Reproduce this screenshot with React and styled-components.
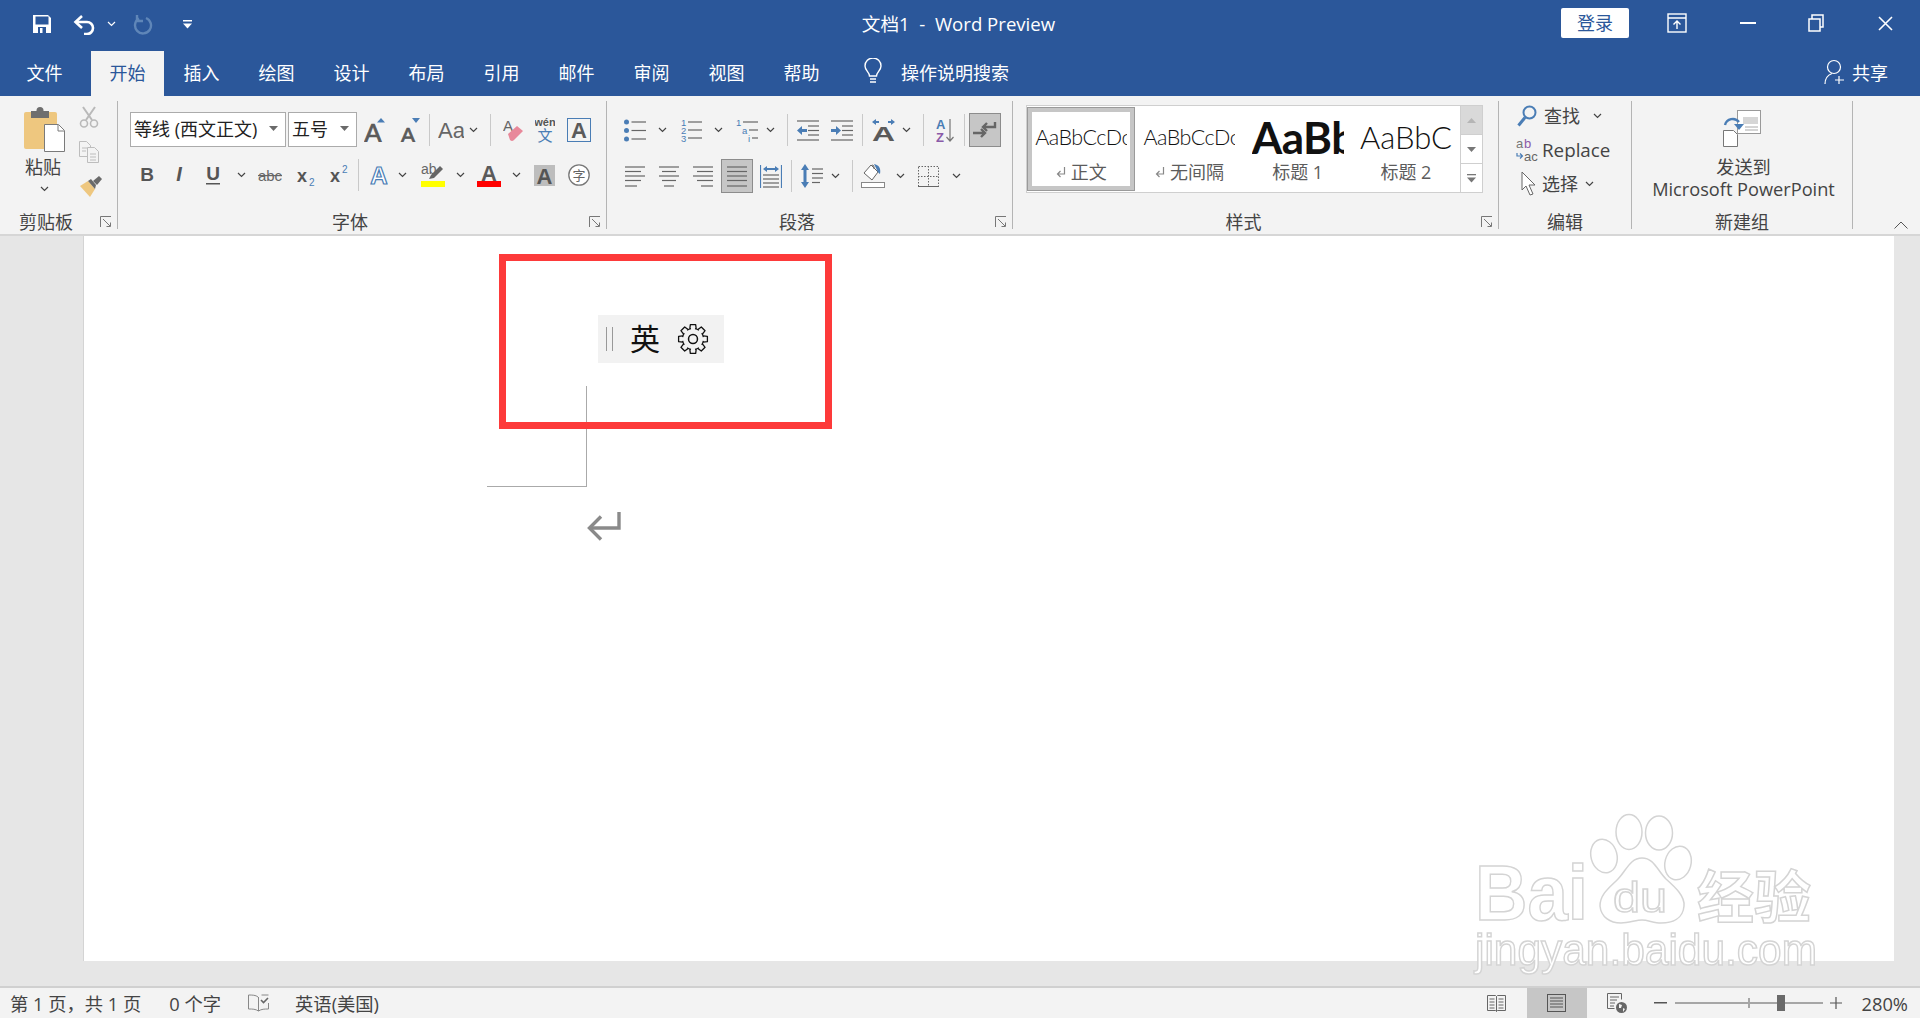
import React from "react";
import styled, { createGlobalStyle } from "styled-components";

const CJK = `"Open Sans", "Noto Sans CJK SC", sans-serif`;
const BLUE = "#4a7db5";
const GRAY = "#666";

const Global = createGlobalStyle`
  html, body { margin: 0; padding: 0; height: 100%; overflow: hidden; }
  body { font-family: ${CJK}; background: #e6e6e6; }
  svg { display: block; flex-shrink: 0; }
`;

const Shell = styled.div`
  position: relative;
  display: flex;
  flex-direction: column;
  height: 100vh;
  overflow: hidden;
`;

const TitleBar = styled.div`
  display: grid;
  grid-template-columns: 1fr auto 1fr;
  height: 51px;
  background: #2b579a;
  color: #fff;
`;

const Quick = styled.div`
  display: flex;
  align-items: center;
  height: 48px;
`;

const QuickItem = styled.span`
  display: flex;
  margin-left: ${(p) => p.$ml}px;
`;

const DocTitle = styled.div`
  font-size: 18.6px;
  line-height: 47px;
  white-space: pre;
  margin-right: 3px;
`;

const WindowControls = styled.div`
  display: flex;
  align-items: center;
  justify-content: flex-end;
  height: 46px;
`;

const SignIn = styled.div`
  width: 68px;
  height: 30px;
  margin-right: 38px;
  background: #fff;
  border-radius: 2px;
  color: #2b579a;
  font-size: 18px;
  line-height: 30px;
  text-align: center;
`;

const TabBar = styled.div`
  display: flex;
  align-items: stretch;
  height: 45px;
  background: #2b579a;
  padding-left: 7px;
  color: #fff;
  font-size: 18px;
`;

const Tab = styled.div`
  width: ${(p) => (p.$active ? 73 : 75)}px;
  margin-right: ${(p) => p.$mr || 0}px;
  line-height: 44px;
  text-align: center;
  background: ${(p) => (p.$active ? "#f3f3f3" : "transparent")};
  color: ${(p) => (p.$active ? "#2b579a" : "#fff")};
`;

const Search = styled.div`
  display: flex;
  align-items: center;
  gap: 19px;
  margin-left: 25px;
  padding-bottom: 4px;
`;

const Share = styled.div`
  display: flex;
  align-items: center;
  gap: 6px;
  margin-left: auto;
  margin-right: 32px;
  padding-bottom: 3px;
`;

const Ribbon = styled.div`
  display: flex;
  align-items: flex-start;
  height: 138px;
  box-sizing: content-box;
  background: #f3f3f3;
  border-bottom: 2px solid #d6d6d6;
  color: #444;
  font-size: 18px;
`;

const Group = styled.div`
  position: relative;
  display: flex;
  flex-direction: column;
  width: ${(p) => p.$w}px;
  height: 133px;
  margin-top: 5px;
`;

const GroupRule = styled.div`
  width: 1px;
  height: 128px;
  margin-top: 5px;
  background: #b4b4b4;
`;

const GroupBody = styled.div`
  display: flex;
  height: 108px;
`;

const GroupLabel = styled.div`
  height: 26px;
  margin-right: ${(p) => p.$mr || 0}px;
  line-height: 28px;
  text-align: center;
  white-space: nowrap;
`;

const Launcher = styled.span`
  position: absolute;
  right: 5px;
  bottom: 6px;
`;

const Collapse = styled.span`
  margin-left: 41px;
  margin-top: 125px;
`;

const PasteCol = styled.div`
  display: flex;
  flex-direction: column;
  align-items: center;
  flex-shrink: 0;
  width: 88px;
  padding-top: 6px;
  line-height: 22px;
`;

const PasteLabel = styled.div`
  margin-top: 4px;
  margin-left: -2px;
`;

const PasteChev = styled.div`
  margin-top: 8px;
`;

const SmallTools = styled.div`
  display: flex;
  flex-direction: column;
  gap: 13px;
  margin-left: -9px;
  padding-top: 5px;
`;

const Stack = styled.div`
  display: flex;
  flex-direction: column;
  padding-top: ${(p) => p.$top}px;
  gap: ${(p) => p.$gap}px;
`;

const ToolRow = styled.div`
  display: flex;
  align-items: center;
  height: ${(p) => p.$h || 34}px;
  padding-left: ${(p) => p.$pl || 0}px;
`;

const Tool = styled.span`
  display: flex;
  flex-shrink: 0;
  margin-left: ${(p) => p.$ml || 0}px;
`;

const RowRule = styled.span`
  flex-shrink: 0;
  width: 1px;
  height: 32px;
  margin-left: ${(p) => p.$ml}px;
  background: #c9c9c9;
`;

const Pressed = styled.span`
  display: flex;
  align-items: center;
  justify-content: center;
  flex-shrink: 0;
  box-sizing: border-box;
  width: 32px;
  height: 34px;
  margin-left: ${(p) => p.$ml}px;
  background: #c6c6c6;
  border: 1px solid #8c8c8c;
`;

const Combo = styled.div`
  display: flex;
  align-items: center;
  justify-content: space-between;
  box-sizing: border-box;
  width: ${(p) => p.$w}px;
  height: 35px;
  margin-right: 2px;
  padding: 0 7px 3px 3px;
  background: #fff;
  border: 1px solid #ababab;
  color: #222;
  white-space: nowrap;
`;

const Gallery = styled.div`
  display: flex;
  box-sizing: border-box;
  width: 457px;
  height: 88px;
  margin: 4px 0 0 13px;
  background: #fff;
  border: 1px solid #cfcfcf;
`;

const StyleItem = styled.div`
  display: flex;
  flex-direction: column;
  align-items: center;
  box-sizing: border-box;
  width: 108.5px;
  height: 84px;
  margin-top: 1px;
  padding-top: ${(p) => (p.$selected ? 0 : 5)}px;
  ${(p) => p.$selected && "border: 5px solid #c6c6c6; outline: 1px solid #9a9a9a; outline-offset: -1px;"}
`;

const Sample = styled.div`
  width: 92px;
  height: 50px;
  overflow: hidden;
  white-space: nowrap;
  color: #111;
  line-height: 50px;
  font-family: "Lato", sans-serif;
  font-size: ${(p) => p.$size}px;
  font-weight: ${(p) => p.$weight || 300};
  letter-spacing: ${(p) => p.$track || 0}px;
`;

const StyleName = styled.div`
  display: flex;
  align-items: center;
  gap: 5px;
  color: #5c5c5c;
  font-size: 18px;
  line-height: 20px;
`;

const GalleryScroll = styled.div`
  display: flex;
  flex-direction: column;
  margin-left: auto;
  width: 22px;
`;

const ScrollBtn = styled.div`
  flex: 1;
  display: flex;
  align-items: center;
  justify-content: center;
  background: ${(p) => (p.$off ? "#d9d9d9" : "#fff")};
  border-left: 1px solid #cfcfcf;
  border-bottom: ${(p) => (p.$last ? 0 : 1)}px solid #cfcfcf;
`;

const EditRow = styled.div`
  display: flex;
  align-items: center;
  height: 30px;
  padding-left: ${(p) => p.$pl || 18}px;
  gap: ${(p) => p.$gap || 5}px;
  font-size: ${(p) => p.$size || 18}px;
  line-height: 28px;
`;

const SendButton = styled.div`
  display: flex;
  flex-direction: column;
  align-items: center;
  width: 100%;
  padding-top: 9px;
  line-height: 22px;
  text-align: center;
  white-space: nowrap;
`;

const SendText = styled.div`
  margin-top: 9px;
  margin-left: 3px;
  font-size: 18.2px;
`;

const Workspace = styled.div`
  flex: 1;
  min-height: 0;
  padding: 0 26px 0 84px;
  background: #e6e6e6;
`;

const Page = styled.div`
  position: relative;
  height: 725px;
  padding: 150px 0 0 403px;
  box-sizing: border-box;
  background: #fff;
  box-shadow: -1px 0 0 #d4d4d4;
`;

const MarginCorner = styled.div`
  width: 99px;
  height: 100px;
  border-right: 1px solid #aaa;
  border-bottom: 1px solid #aaa;
`;

const ParaMark = styled.div`
  margin: 24px 0 0 100px;
`;

const Callout = styled.div`
  position: absolute;
  left: 415px;
  top: 18px;
  box-sizing: border-box;
  width: 333px;
  height: 175px;
  border: 7px solid #fd3a3a;
`;

const ImeBar = styled.div`
  position: absolute;
  left: 514px;
  top: 79px;
  display: flex;
  align-items: center;
  width: 126px;
  height: 48px;
  background: #f2f2f2;
  color: #111;
  font-size: 30px;
`;

const ImeGrip = styled.span`
  width: 5px;
  height: 24px;
  margin: 0 17px 0 8px;
  border-left: 1px solid #999;
  border-right: 1px solid #999;
`;

const ImeLang = styled.span`
  margin-right: 17px;
  line-height: 48px;
`;

const StatusBar = styled.div`
  display: flex;
  align-items: center;
  height: 30px;
  background: #f3f3f3;
  border-top: 2px solid #d0d0d0;
  color: #444;
  font-size: 18.3px;
  white-space: nowrap;
`;

const StatusText = styled.span`
  margin-left: ${(p) => p.$ml}px;
`;

const ViewBtn = styled.span`
  display: flex;
  align-items: center;
  justify-content: center;
  width: ${(p) => p.$w}px;
  height: 30px;
  margin-left: ${(p) => (p.$auto ? "auto" : "0")};
  background: ${(p) => (p.$active ? "#c6c6c6" : "transparent")};
`;

const ZoomTrack = styled.div`
  position: relative;
  width: 148px;
  height: 2px;
  margin: 0 7px 0 8px;
  background: #a6a6a6;
`;

const ZoomTick = styled.span`
  position: absolute;
  left: 73px;
  top: -4px;
  width: 2px;
  height: 10px;
  background: #a6a6a6;
`;

const ZoomThumb = styled.span`
  position: absolute;
  left: 102px;
  top: -7px;
  width: 8px;
  height: 16px;
  background: #6a6a6a;
`;

const Watermark = styled.div`
  position: absolute;
  left: 1465px;
  top: 805px;
  pointer-events: none;
  svg { filter: blur(0.5px); }
`;

/* small shared drawings */
const Chev = ({ ml, c = "#444" }) => (
  <Tool $ml={ml}>
    <svg width="9" height="6" viewBox="0 0 9 6"><path d="M1 1l3.5 3.5L8 1" fill="none" stroke={c} strokeWidth="1.2" /></svg>
  </Tool>
);

const LauncherIcon = () => (
  <svg width="12" height="12" viewBox="0 0 12 12" fill="none" stroke="#777" strokeWidth="1">
    <path d="M.5 11V.5H11" />
    <path d="M3 3l7 7M10.500 6.500v4h-4" />
  </svg>
);

const DownTriangle = () => (
  <svg width="9" height="5" viewBox="0 0 9 5"><path d="M0 0h9L4.500 5z" fill="#6a6a6a" /></svg>
);

const GlyphA = ({ w, h, size, y, x, children }) => (
  <svg width={w} height={h} viewBox={`0 0 ${w} ${h}`}>
    <text x={x ?? w / 2} y={y} textAnchor="middle" fontFamily="Liberation Sans, sans-serif" fontSize={size} fill="#5a5a5a" stroke="#5a5a5a" strokeWidth="0.7">A</text>
    {children}
  </svg>
);

const Lines = ({ x1, x2, ys, c = GRAY }) => ys.map((y, i) => {
  const a = Array.isArray(x1) ? x1[i] : x1;
  const b = Array.isArray(x2) ? x2[i] : x2;
  return <path key={y} d={`M${a} ${y}H${b}`} stroke={c} strokeWidth="1.2" />;
});

const smallNum = { fontFamily: "Liberation Sans, sans-serif", fontSize: 9.5, fill: BLUE };

/* quick access and window icons */
const SaveIcon = () => (
  <svg width="20" height="20" viewBox="0 0 20 20">
    <path d="M1 1h15l3 3v15H1z" fill="#fff" />
    <rect x="3.500" y="2.500" width="13" height="8" fill="#2b579a" />
    <rect x="6" y="13" width="8" height="6" fill="#2b579a" />
    <rect x="8" y="14" width="2.500" height="5" fill="#fff" />
  </svg>
);
const UndoIcon = () => (
  <svg width="24" height="21" viewBox="0 0 24 21" fill="none" stroke="#fff" strokeWidth="2.600">
    <path d="M9 2L2.500 8 9 14" />
    <path d="M3 8h11a6 6 0 0 1 0 12h-3" />
  </svg>
);
const RedoIcon = () => (
  <svg width="21" height="21" viewBox="0 0 21 21" fill="none" stroke="#5f86b8" strokeWidth="2.400">
    <path d="M7 4.500a8 8 0 1 0 7-.5" />
    <path d="M5 1v6h6" />
  </svg>
);
const CustomizeIcon = () => (
  <svg width="9" height="9" viewBox="0 0 9 9" fill="#fff"><rect y="0" width="9" height="1.500" /><path d="M0 3.500h9L4.500 8.500z" /></svg>
);
const DisplayIcon = () => (
  <svg width="20" height="20" viewBox="0 0 20 20" fill="none" stroke="#fff" strokeWidth="1.400">
    <rect x="1" y="1" width="18" height="18" />
    <path d="M1 5h18M10 16V8M6.500 11.500L10 8l3.500 3.500" />
  </svg>
);
const MinIcon = () => <svg width="16" height="2" viewBox="0 0 16 2"><rect width="16" height="2" fill="#fff" /></svg>;
const RestoreIcon = () => (
  <svg width="16" height="18" viewBox="0 0 16 18" fill="none" stroke="#fff" strokeWidth="1.500">
    <rect x="1" y="5" width="11" height="12" />
    <path d="M4 5V1h11v12h-3" />
  </svg>
);
const CloseIcon = () => (
  <svg width="15" height="15" viewBox="0 0 15 15" stroke="#fff" strokeWidth="1.600"><path d="M1 1l13 13M14 1L1 14" /></svg>
);
const BulbIcon = () => (
  <svg width="18" height="27" viewBox="0 0 18 27" fill="none" stroke="#fff" strokeWidth="1.400">
    <path d="M5.500 18c0-4-4.500-5.500-4.500-10a8 8 0 0 1 16 0c0 4.500-4.500 6-4.500 10z" />
    <path d="M6 21h6M6 24h6" />
  </svg>
);
const ShareIcon = () => (
  <svg width="22" height="26" viewBox="0 0 22 26" fill="none" stroke="#fff" strokeWidth="1.200">
    <circle cx="10" cy="8" r="6.500" />
    <path d="M1 25c0-6 3-9 7-10.500M15 17v8M11 21h9" />
  </svg>
);

/* clipboard */
const PasteIcon = () => (
  <svg width="41" height="45" viewBox="0 0 41 45">
    <rect x="0" y="5" width="33" height="37" rx="2" fill="#eec77f" />
    <rect x="7" y="4" width="18" height="7" fill="#6e6e6e" />
    <circle cx="16" cy="3.500" r="3.500" fill="#6e6e6e" />
    <path d="M20.500 17.500h14l6 6v21h-20z" fill="#fff" stroke="#7a7a7a" />
    <path d="M34 18v6h6" fill="none" stroke="#7a7a7a" />
  </svg>
);
const CutIcon = () => (
  <svg width="20" height="22" viewBox="0 0 20 22" fill="none" stroke="#b9b9b9" strokeWidth="2">
    <path d="M4 1l9 13M16 1L7 14" />
    <circle cx="5" cy="17.500" r="3.500" strokeWidth="1.600" />
    <circle cx="15" cy="17.500" r="3.500" strokeWidth="1.600" />
  </svg>
);
const CopyIcon = () => (
  <svg width="20" height="22" viewBox="0 0 20 22" fill="#f3f3f3" stroke="#bdbdbd">
    <path d="M.5.500h7l4 4v11H.5z" />
    <path d="M8.500 6.500h7l4 4v11h-11z" />
    <path d="M3 7h5M3 10h4M11 13h6M11 16h6M11 19h6" />
  </svg>
);
const PainterIcon = () => (
  <svg width="23" height="21" viewBox="0 0 23 21">
    <path d="M1 10l8-5 7 8-5 8z" fill="#eec77f" />
    <path d="M9 5l3-2 5 6-1 4z" fill="#6a6a6a" />
    <path d="M14 5l6-5 3 3-5 6z" fill="#6a6a6a" />
  </svg>
);

/* font group */
const GrowIcon = () => (
  <GlyphA w={22} h={24} size={26} y={24} x={9}><path d="M13 4.500h8L17 0z" fill={BLUE} /></GlyphA>
);
const ShrinkIcon = () => (
  <GlyphA w={20} h={24} size={21} y={24} x={8}><path d="M12 0h8l-4 5z" fill={BLUE} /></GlyphA>
);
const CaseIcon = () => (
  <svg width="26" height="22" viewBox="0 0 26 22">
    <text x="0" y="19" fontFamily="Liberation Sans, sans-serif" fontSize="22" fill="#666">Aa</text>
  </svg>
);
const EraserIcon = () => (
  <svg width="20" height="24" viewBox="0 0 20 24">
    <text x="0" y="13" fontFamily="Liberation Sans, sans-serif" fontSize="15" fill="#666">A</text>
    <path d="M5 16l9-8 6 5-9 9q-2 2-4 0z" fill="#e8889a" />
  </svg>
);
const WenIcon = () => (
  <svg width="20" height="26" viewBox="0 0 20 26">
    <text x="10" y="9" textAnchor="middle" fontFamily="Liberation Sans, sans-serif" fontWeight="bold" fontSize="11" fill="#555">wén</text>
    <text x="10" y="24" textAnchor="middle" fontFamily="Noto Sans CJK SC, sans-serif" fontSize="15" fill={BLUE}>文</text>
  </svg>
);
const BoxAIcon = () => (
  <svg width="24" height="24" viewBox="0 0 24 24">
    <rect x=".500" y=".500" width="23" height="23" fill="none" stroke={BLUE} />
    <text x="12" y="20" textAnchor="middle" fontFamily="Liberation Sans, sans-serif" fontWeight="bold" fontSize="22" fill="#5a5a5a">A</text>
  </svg>
);
const StyleText = ({ w, children, style, size = 19, y = 18 }) => (
  <svg width={w} height="24" viewBox={`0 0 ${w} 24`}>
    <text x={w / 2} y={y} textAnchor="middle" fontFamily="Liberation Sans, sans-serif" fontWeight="bold" fontStyle={style} fontSize={size} fill="#555">{children}</text>
  </svg>
);
const UnderlineIcon = () => (
  <svg width="14" height="24" viewBox="0 0 14 24">
    <text x="7" y="17" textAnchor="middle" fontFamily="Liberation Sans, sans-serif" fontWeight="bold" fontSize="19" fill="#555">U</text>
    <rect x="0" y="20" width="14" height="1.500" fill="#555" />
  </svg>
);
const StrikeIcon = () => (
  <svg width="24" height="24" viewBox="0 0 24 24">
    <text x="12" y="18" textAnchor="middle" fontFamily="Liberation Sans, sans-serif" fontSize="15" fill="#666">abc</text>
    <rect x="0" y="12" width="24" height="1.200" fill="#666" />
  </svg>
);
const ScriptIcon = ({ up }) => (
  <svg width="19" height="24" viewBox="0 0 19 24">
    <text x="0" y="19" fontFamily="Liberation Sans, sans-serif" fontWeight="bold" fontSize="18" fill="#555">x</text>
    <text x="12" y={up ? 10 : 23} fontFamily="Liberation Sans, sans-serif" fontSize="10" fill={BLUE}>2</text>
  </svg>
);
const GlowIcon = () => (
  <svg width="18" height="24" viewBox="0 0 18 24">
    <text x="9" y="21" textAnchor="middle" fontFamily="Liberation Sans, sans-serif" fontWeight="bold" fontSize="24" fill="#fff" stroke={BLUE} strokeWidth="1.200">A</text>
  </svg>
);
const HighlightIcon = () => (
  <svg width="24" height="24" viewBox="0 0 24 24">
    <text x="0" y="11" fontFamily="Liberation Sans, sans-serif" fontSize="14" fill="#666">ab</text>
    <path d="M8 16l2-4 9-9 3 3-9 9z" fill="#666" />
    <rect x="0" y="18" width="24" height="6" fill="#ff0" />
  </svg>
);
const ColorAIcon = () => (
  <svg width="24" height="24" viewBox="0 0 24 24">
    <text x="12" y="18" textAnchor="middle" fontFamily="Liberation Sans, sans-serif" fontWeight="bold" fontSize="22" fill="#5a5a5a">A</text>
    <rect x="0" y="18" width="24" height="6" fill="#f00" />
  </svg>
);
const ShadedAIcon = () => (
  <svg width="21" height="21" viewBox="0 0 21 21">
    <rect width="21" height="21" fill="#bdbdbd" />
    <text x="10.500" y="18.500" textAnchor="middle" fontFamily="Liberation Sans, sans-serif" fontWeight="bold" fontSize="22" fill="#555">A</text>
  </svg>
);
const CircledIcon = () => (
  <svg width="22" height="22" viewBox="0 0 22 22">
    <circle cx="11" cy="11" r="10.200" fill="#fff" stroke="#777" strokeWidth="1.300" />
    <text x="11" y="16" textAnchor="middle" fontFamily="Noto Sans CJK SC, sans-serif" fontSize="13" fill="#666">字</text>
  </svg>
);

/* paragraph group */
const BulletsIcon = () => (
  <svg width="22" height="23" viewBox="0 0 22 23">
    {[3, 11.500, 20].map((y) => <circle key={y} cx="2.500" cy={y} r="2.500" fill={BLUE} />)}
    <Lines x1={7.500} x2={22} ys={[3, 11.500, 20]} />
  </svg>
);
const NumberedIcon = () => (
  <svg width="22" height="24" viewBox="0 0 22 24">
    <text x="1" y="8" {...smallNum}>1</text><text x="1" y="16" {...smallNum}>2</text><text x="1" y="24" {...smallNum}>3</text>
    <Lines x1={8} x2={22} ys={[4, 12, 20]} />
  </svg>
);
const MultiIcon = () => (
  <svg width="22" height="24" viewBox="0 0 22 24">
    <text x="0" y="8" {...smallNum}>1</text><text x="6" y="16" {...smallNum}>a</text><text x="12" y="24" {...smallNum}>i</text>
    <Lines x1={[7, 13, 16]} x2={22} ys={[4, 12, 20]} />
  </svg>
);
const IndentIcon = ({ out }) => (
  <svg width="22" height="21" viewBox="0 0 22 21">
    <Lines x1={[0, 11, 11, 11, 0]} x2={22} ys={[1, 6, 10.500, 15, 20]} />
    <path d={out ? "M0 10.500L5 6v3h5v3H5v3z" : "M10 10.500L5 6v3H0v3h5v3z"} fill={BLUE} />
  </svg>
);
const DirectionIcon = () => (
  <svg width="23" height="22" viewBox="0 0 23 22">
    <path d="M0 3l4-3v2h3v2H4v2zM23 3l-4-3v2h-3v2h3v2z" fill={BLUE} />
    <text x="11.500" y="22" textAnchor="middle" fontFamily="Liberation Sans, sans-serif" fontWeight="bold" fontSize="21" fill="#5a5a5a" textLength="23" lengthAdjust="spacingAndGlyphs">A</text>
  </svg>
);
const SortIcon = () => (
  <svg width="18" height="25" viewBox="0 0 18 25">
    <text x="0" y="11" fontFamily="Liberation Sans, sans-serif" fontWeight="bold" fontSize="13" fill={BLUE}>A</text>
    <text x="0" y="24" fontFamily="Liberation Sans, sans-serif" fontWeight="bold" fontSize="13" fill="#8a5aa8">Z</text>
    <path d="M14 1v22M10.500 19l3.500 4 3.500-4" fill="none" stroke="#777" strokeWidth="1.200" />
  </svg>
);
const MarksIcon = () => (
  <svg width="24" height="20" viewBox="0 0 24 20" fill="none" stroke="#666" strokeWidth="2.400">
    <path d="M22 2v5H11M14 3l-4 4 4 4" />
    <path d="M0 13h11M8 9l4 4-4 4" />
  </svg>
);
const AlignIcon = ({ spans }) => (
  <svg width="20" height="21" viewBox="0 0 20 21">
    <Lines x1={spans.map((s) => s[0])} x2={spans.map((s) => s[1])} ys={[1, 5.500, 10, 14.500, 20]} />
  </svg>
);
const DistributeIcon = () => (
  <svg width="22" height="23" viewBox="0 0 22 23">
    <path d="M.500 0v23M21.500 0v23" stroke={BLUE} strokeWidth="1.200" />
    <path d="M3 4l4-3v2h8V1l4 3-4 3V5H7v2z" fill={BLUE} />
    <Lines x1={3} x2={19} ys={[10, 14, 18, 22]} />
  </svg>
);
const SpacingIcon = () => (
  <svg width="22" height="24" viewBox="0 0 22 24">
    <path d="M4 0l4 6H5.500v12H8l-4 6-4-6h2.500V6H0z" fill={BLUE} />
    <Lines x1={11} x2={22} ys={[5, 9.500, 14]} />
    <Lines x1={11} x2={19} ys={[18.500]} />
  </svg>
);
const ShadeIcon = () => (
  <svg width="24" height="24" viewBox="0 0 24 24">
    <path d="M10 1l7 7-6 8-8-7z" fill="#fff" stroke="#666" />
    <path d="M11 5V1M13 0c5 1 7 4 6 10-2-1-3-4-4-6z" fill={BLUE} stroke="none" />
    <path d="M11 1a2 2 0 0 1 2 2v2" fill="none" stroke="#666" />
    <rect x=".500" y="18.500" width="23" height="5" fill="#fff" stroke="#888" />
  </svg>
);
const BordersIcon = () => (
  <svg width="21" height="21" viewBox="0 0 21 21" fill="none" stroke="#666" strokeDasharray="1.500 1.500">
    <path d="M.500.500h20v20H.500zM10.500 0v21M0 10.500h21" />
    <path d="M0 20.500h21" strokeDasharray="none" />
  </svg>
);

/* styles, editing, new group */
const ReturnTiny = () => (
  <svg width="10" height="12" viewBox="0 0 10 12" fill="none" stroke="#888" strokeWidth="1.200"><path d="M8.500 1v7H2M4.500 5L1.500 8l3 3" /></svg>
);
const UpTri = ({ c }) => <svg width="9" height="5" viewBox="0 0 9 5"><path d="M0 5h9L4.500 0z" fill={c} /></svg>;
const DownTri = ({ c }) => <svg width="9" height="5" viewBox="0 0 9 5"><path d="M0 0h9L4.500 5z" fill={c} /></svg>;
const MoreTri = () => (
  <svg width="9" height="9" viewBox="0 0 9 9" fill="#777"><rect width="9" height="1.300" /><path d="M0 3.500h9L4.500 8.500z" /></svg>
);
const FindIcon = () => (
  <svg width="20" height="22" viewBox="0 0 20 22" fill="none" stroke={BLUE}>
    <circle cx="12.500" cy="7.500" r="6" strokeWidth="2" />
    <path d="M8 12.500L1.500 20.500" strokeWidth="3" />
  </svg>
);
const ReplaceIcon = () => (
  <svg width="23" height="24" viewBox="0 0 23 24">
    <text x="0" y="10" fontFamily="Liberation Sans, sans-serif" fontSize="13" fill="#777">a</text>
    <text x="8" y="10" fontFamily="Liberation Sans, sans-serif" fontSize="13" fill="#8a5aa8">b</text>
    <text x="8" y="23" fontFamily="Liberation Sans, sans-serif" fontSize="13" fill="#666">ac</text>
    <path d="M1 15v3h5M4 15.500L6.500 18 4 20.500" fill="none" stroke={BLUE} strokeWidth="1.200" />
  </svg>
);
const PointerIcon = () => (
  <svg width="16" height="26" viewBox="0 0 16 26"><path d="M1 1v18l4-4 4 9 3-1-4-9h6z" fill="#fff" stroke="#666" /></svg>
);
const SendIcon = () => (
  <svg width="38" height="37" viewBox="0 0 38 37">
    <rect x="14.500" y=".500" width="23" height="23" fill="#fff" stroke="#999" />
    <path d="M20 7h15v7H20z" fill="#d6d6d6" />
    <path d="M22 17h13M22 20h13" stroke="#aaa" />
    <path d="M.500 20.500h10l4 4v12H.500z" fill="#fff" stroke="#777" />
    <path d="M2 15a8 8 0 0 1 14-3" fill="none" stroke={BLUE} strokeWidth="2.400" />
    <path d="M11 14h10l-5 6z" fill={BLUE} />
  </svg>
);
const CaretUp = () => (
  <svg width="14" height="8" viewBox="0 0 14 8"><path d="M.500 7.500L7 1l6.500 6.500" fill="none" stroke="#555" /></svg>
);

/* document */
const ReturnMark = () => (
  <svg width="34" height="30" viewBox="0 0 34 30" fill="none" stroke="#8a8a8a" strokeWidth="3.400">
    <path d="M32 1v16H3" />
    <path d="M14 5.500L2.500 17 14 28.500" />
  </svg>
);
const GearIcon = () => {
  const teeth = Array.from({ length: 8 }, (_, i) => i * 45);
  return (
    <svg width="32" height="32" viewBox="0 0 30 30" fill="none" stroke="#111" strokeWidth="1.200">
      {teeth.map((a) => (
        <path key={a} transform={`rotate(${a} 15 15)`} d="M12 5.500L12.500 1.500h5L18 5.500" strokeLinejoin="round" />
      ))}
      {teeth.map((a) => (
        <path key={a} transform={`rotate(${a + 22.5} 15 15)`} d="M13 5.300a10 10 0 0 1 4 0" />
      ))}
      <circle cx="15" cy="15" r="4.200" strokeWidth="1.400" />
    </svg>
  );
};

/* status bar */
const ProofIcon = () => (
  <svg width="21" height="18" viewBox="0 0 21 18" fill="none" stroke="#888">
    <path d="M10 3C8 1 4 1 .5 1v14c4 0 7 0 10 2 3-2 6-2 10-2V9M10.500 3v14M20.500 1h-7" />
    <path d="M13 6l2.500 2.500L20 4" stroke="#666" strokeWidth="1.600" />
  </svg>
);
const ReadIcon = () => (
  <svg width="19" height="19" viewBox="0 0 19 19" fill="none" stroke="#666">
    <path d="M.500 1.500h8l1 1 1-1h8v15h-8l-1 1-1-1h-8zM9.500 2.500v15" />
    <path d="M2.500 5h5M2.500 8h5M2.500 11h5M2.500 14h5M11.500 5h5M11.500 8h5M11.500 11h5M11.500 14h5" />
  </svg>
);
const PrintIcon = () => (
  <svg width="19" height="18" viewBox="0 0 19 18" fill="none" stroke="#555">
    <rect x=".500" y=".500" width="18" height="17" />
    <path d="M3 4h13M3 7h13M3 10h13M3 13h13" />
  </svg>
);
const WebIcon = () => (
  <svg width="20" height="20" viewBox="0 0 20 20">
    <path d="M.500.500h14v6M.500.500v15h7M3 4h9M3 7h7M3 10h5M3 13h4" fill="none" stroke="#666" />
    <circle cx="14.500" cy="14.500" r="5.500" fill="#666" />
    <path d="M12 11l3 1-1 3-2 0zM16 15l2 1-2 3z" fill="#f3f3f3" />
  </svg>
);

const Baidu = () => (
  <Watermark>
    <svg width="360" height="180" viewBox="0 0 360 180">
      <g fill="#fff" stroke="#d4d4d4" strokeWidth="1.500">
        <text x="10" y="115" fontFamily="Liberation Sans, sans-serif" fontWeight="bold" fontSize="78" textLength="113" lengthAdjust="spacingAndGlyphs">Bai</text>
        <ellipse cx="164" cy="27" rx="13" ry="17.500" />
        <ellipse cx="194" cy="28" rx="13.500" ry="17" />
        <ellipse cx="139" cy="51" rx="13" ry="17" transform="rotate(-15 139 51)" />
        <ellipse cx="213" cy="58" rx="13" ry="17" transform="rotate(15 213 58)" />
        <path d="M177 53c12 0 15 12 24 21 9 8 19 17 18 27-1 13-12 17-23 17-7 0-13-3-19-3s-13 3-21 3c-11 0-20-6-21-17 0-12 10-19 18-27 8-8 12-21 24-21z" />
        <text x="148" y="107" fontFamily="Liberation Sans, sans-serif" fontSize="42" textLength="54" lengthAdjust="spacingAndGlyphs">du</text>
        <text x="232" y="113" fontFamily="Noto Sans CJK SC, sans-serif" fontWeight="bold" fontSize="57">经验</text>
        <text x="10" y="160" fontFamily="Liberation Sans, sans-serif" fontSize="44" textLength="342" lengthAdjust="spacingAndGlyphs">jingyan.baidu.com</text>
      </g>
    </svg>
  </Watermark>
);

const tabs = ["插入", "绘图", "设计", "布局", "引用", "邮件", "审阅", "视图", "帮助"];

const App = () => (
  <Shell>
    <Global />
    <TitleBar>
      <Quick>
        <QuickItem $ml={32}><SaveIcon /></QuickItem>
        <QuickItem $ml={21}><UndoIcon /></QuickItem>
        <QuickItem $ml={10}><Chev c="#fff" /></QuickItem>
        <QuickItem $ml={16}><RedoIcon /></QuickItem>
        <QuickItem $ml={30}><CustomizeIcon /></QuickItem>
      </Quick>
      <DocTitle>文档1  -  Word Preview</DocTitle>
      <WindowControls>
        <SignIn>登录</SignIn>
        <DisplayIcon />
        <QuickItem $ml={53}><MinIcon /></QuickItem>
        <QuickItem $ml={52}><RestoreIcon /></QuickItem>
        <QuickItem $ml={54}><CloseIcon /></QuickItem>
        <QuickItem $ml={27} />
      </WindowControls>
    </TitleBar>

    <TabBar>
      <Tab $mr={9}>文件</Tab>
      <Tab $active>开始</Tab>
      {tabs.map((t) => <Tab key={t}>{t}</Tab>)}
      <Search><BulbIcon />操作说明搜索</Search>
      <Share><ShareIcon />共享</Share>
    </TabBar>

    <Ribbon>
      <Group $w={117}>
        <GroupBody>
          <PasteCol>
            <PasteIcon />
            <PasteLabel>粘贴</PasteLabel>
            <PasteChev><Chev /></PasteChev>
          </PasteCol>
          <SmallTools>
            <CutIcon />
            <CopyIcon />
            <PainterIcon />
          </SmallTools>
        </GroupBody>
        <GroupLabel $mr={25}>剪贴板</GroupLabel>
        <Launcher><LauncherIcon /></Launcher>
      </Group>
      <GroupRule />

      <Group $w={488}>
        <GroupBody>
          <Stack $top={11} $gap={12}>
            <ToolRow $h={35} $pl={12}>
              <Combo $w={156}>等线 (西文正文)<DownTriangle /></Combo>
              <Combo $w={69}>五号<DownTriangle /></Combo>
              <Tool $ml={5}><GrowIcon /></Tool>
              <Tool $ml={14}><ShrinkIcon /></Tool>
              <RowRule $ml={9} />
              <Tool $ml={8}><CaseIcon /></Tool>
              <Chev ml={5} />
              <RowRule $ml={12} />
              <Tool $ml={12}><EraserIcon /></Tool>
              <Tool $ml={12}><WenIcon /></Tool>
              <Tool $ml={12}><BoxAIcon /></Tool>
            </ToolRow>
            <ToolRow $h={32}>
              <Tool $ml={22}><StyleText w={14}>B</StyleText></Tool>
              <Tool $ml={19}><StyleText w={12} style="italic" size={20}>I</StyleText></Tool>
              <Tool $ml={21}><UnderlineIcon /></Tool>
              <Chev ml={17} />
              <Tool $ml={12}><StrikeIcon /></Tool>
              <Tool $ml={15}><ScriptIcon /></Tool>
              <Tool $ml={14}><ScriptIcon up /></Tool>
              <RowRule $ml={9} />
              <Tool $ml={11}><GlowIcon /></Tool>
              <Chev ml={10} />
              <Tool $ml={14}><HighlightIcon /></Tool>
              <Chev ml={11} />
              <Tool $ml={12}><ColorAIcon /></Tool>
              <Chev ml={11} />
              <Tool $ml={13}><ShadedAIcon /></Tool>
              <Tool $ml={13}><CircledIcon /></Tool>
            </ToolRow>
          </Stack>
        </GroupBody>
        <GroupLabel $mr={24}>字体</GroupLabel>
        <Launcher><LauncherIcon /></Launcher>
      </Group>
      <GroupRule />

      <Group $w={405}>
        <GroupBody>
          <Stack $top={12} $gap={12}>
            <ToolRow>
              <Tool $ml={17}><BulletsIcon /></Tool>
              <Chev ml={12} />
              <Tool $ml={13}><NumberedIcon /></Tool>
              <Chev ml={12} />
              <Tool $ml={13}><MultiIcon /></Tool>
              <Chev ml={8} />
              <RowRule $ml={12} />
              <Tool $ml={9}><IndentIcon out /></Tool>
              <Tool $ml={12}><IndentIcon /></Tool>
              <RowRule $ml={9} />
              <Tool $ml={9}><DirectionIcon /></Tool>
              <Chev ml={7} />
              <RowRule $ml={12} />
              <Tool $ml={12}><SortIcon /></Tool>
              <RowRule $ml={10} />
              <Pressed $ml={4}><MarksIcon /></Pressed>
            </ToolRow>
            <ToolRow>
              <Tool $ml={18}><AlignIcon spans={[[0, 20], [0, 16], [0, 20], [0, 16], [0, 12]]} /></Tool>
              <Tool $ml={14}><AlignIcon spans={[[0, 20], [3, 17], [0, 20], [3, 17], [5, 15]]} /></Tool>
              <Tool $ml={14}><AlignIcon spans={[[0, 20], [4, 20], [0, 20], [4, 20], [8, 20]]} /></Tool>
              <Pressed $ml={8}><AlignIcon spans={[[0, 20], [0, 20], [0, 20], [0, 20], [0, 20]]} /></Pressed>
              <Tool $ml={7}><DistributeIcon /></Tool>
              <RowRule $ml={9} />
              <Tool $ml={9}><SpacingIcon /></Tool>
              <Chev ml={8} />
              <RowRule $ml={12} />
              <Tool $ml={8}><ShadeIcon /></Tool>
              <Chev ml={11} />
              <Tool $ml={13}><BordersIcon /></Tool>
              <Chev ml={13} />
            </ToolRow>
          </Stack>
        </GroupBody>
        <GroupLabel $mr={25}>段落</GroupLabel>
        <Launcher><LauncherIcon /></Launcher>
      </Group>
      <GroupRule />

      <Group $w={485}>
        <GroupBody>
          <Gallery>
            <StyleItem $selected>
              <Sample $size={21.5} $track={-0.5}>AaBbCcDc</Sample>
              <StyleName><ReturnTiny />正文</StyleName>
            </StyleItem>
            <StyleItem>
              <Sample $size={21.5} $track={-0.5}>AaBbCcDc</Sample>
              <StyleName><ReturnTiny />无间隔</StyleName>
            </StyleItem>
            <StyleItem>
              <Sample $size={44} $weight={700} $track={-0.5}>AaBb</Sample>
              <StyleName>标题 1</StyleName>
            </StyleItem>
            <StyleItem>
              <Sample $size={31}>AaBbC</Sample>
              <StyleName>标题 2</StyleName>
            </StyleItem>
            <GalleryScroll>
              <ScrollBtn $off><UpTri c="#b5b5b5" /></ScrollBtn>
              <ScrollBtn><DownTri c="#777" /></ScrollBtn>
              <ScrollBtn $last><MoreTri /></ScrollBtn>
            </GalleryScroll>
          </Gallery>
        </GroupBody>
        <GroupLabel $mr={24}>样式</GroupLabel>
        <Launcher><LauncherIcon /></Launcher>
      </Group>
      <GroupRule />

      <Group $w={132}>
        <GroupBody>
          <Stack $top={0} $gap={4}>
            <EditRow $gap={7}><FindIcon />查找<Chev ml={6} /></EditRow>
            <EditRow $pl={17} $gap={3} $size={18.8}><ReplaceIcon />Replace</EditRow>
            <EditRow $pl={22} $gap={5}><PointerIcon />选择<Chev ml={2} /></EditRow>
          </Stack>
        </GroupBody>
        <GroupLabel>编辑</GroupLabel>
      </Group>
      <GroupRule />

      <Group $w={220}>
        <GroupBody>
          <SendButton>
            <SendIcon />
            <SendText>发送到<br />Microsoft PowerPoint</SendText>
          </SendButton>
        </GroupBody>
        <GroupLabel>新建组</GroupLabel>
      </Group>
      <GroupRule />
      <Collapse><CaretUp /></Collapse>
    </Ribbon>

    <Workspace>
      <Page>
        <MarginCorner />
        <ParaMark><ReturnMark /></ParaMark>
        <Callout />
        <ImeBar>
          <ImeGrip />
          <ImeLang>英</ImeLang>
          <GearIcon />
        </ImeBar>
      </Page>
    </Workspace>

    <StatusBar>
      <StatusText $ml={10}>第 1 页，共 1 页</StatusText>
      <StatusText $ml={28}>0 个字</StatusText>
      <Tool $ml={27}><ProofIcon /></Tool>
      <StatusText $ml={26}>英语(美国)</StatusText>
      <ViewBtn $w={60} $auto><ReadIcon /></ViewBtn>
      <ViewBtn $w={60} $active><PrintIcon /></ViewBtn>
      <ViewBtn $w={60}><WebIcon /></ViewBtn>
      <Tool $ml={7}><svg width="13" height="2"><rect width="13" height="1.500" fill="#555" /></svg></Tool>
      <ZoomTrack><ZoomTick /><ZoomThumb /></ZoomTrack>
      <Tool><svg width="12" height="12" viewBox="0 0 12 12"><path d="M6 0v12M0 6h12" stroke="#555" strokeWidth="1.200" /></svg></Tool>
      <StatusText $ml={20}>280%</StatusText>
      <StatusText $ml={12} />
    </StatusBar>

    <Baidu />
  </Shell>
);

export default App;
